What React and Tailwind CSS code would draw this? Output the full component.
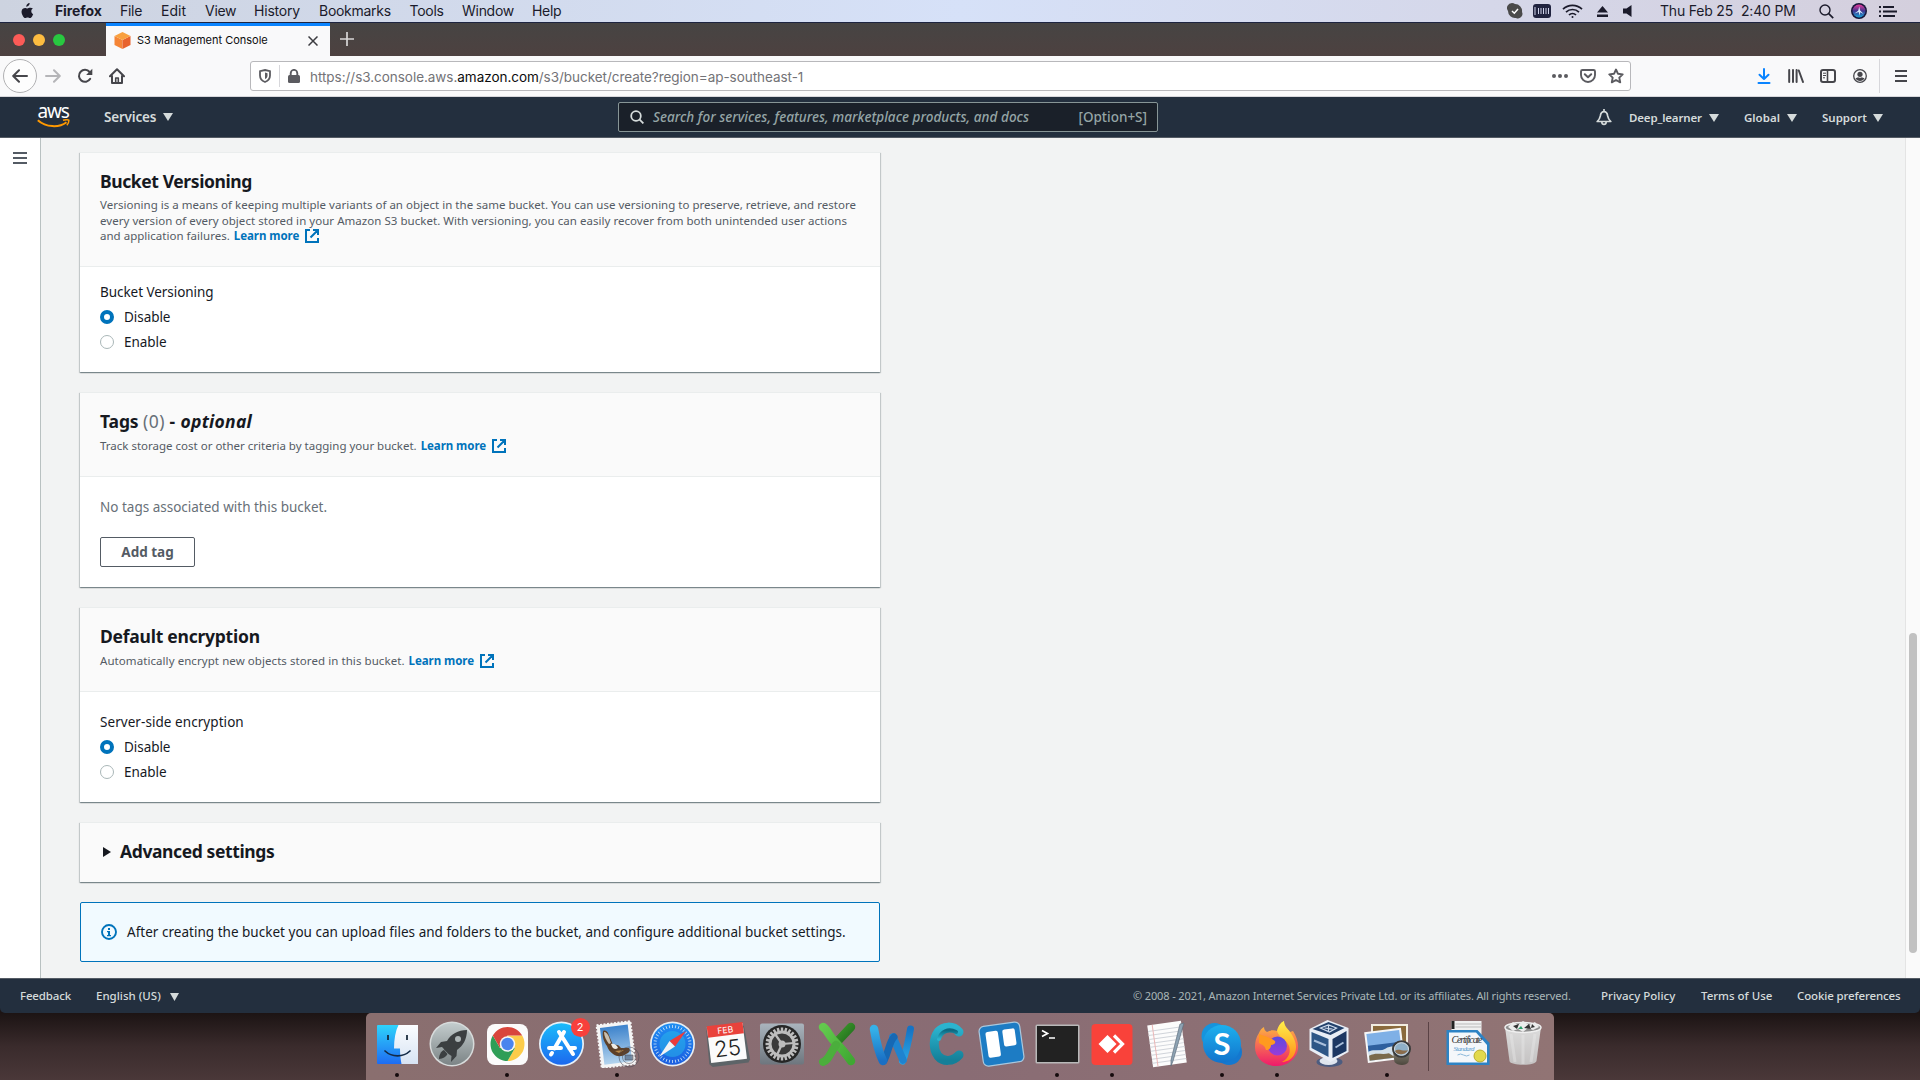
import React from "react";

const SF = "font-[Inter,sans-serif]";

function T({ className = "", children }) {
  return <span className={"whitespace-nowrap " + className}>{children}</span>;
}

function Caret({ className = "w-[10px]" }) {
  return (
    <svg className={"h-[8px] shrink-0 " + className} viewBox="0 0 10 8" preserveAspectRatio="none">
      <path d="M0 0h10L5 8z" fill="currentColor" />
    </svg>
  );
}

/* ---------- macOS menu bar ---------- */

function MenuBar() {
  return (
    <div className={"flex h-[23px] shrink-0 items-center border-b border-[#1d2440] bg-linear-to-r from-[#cdd3e0] via-[#d6e1f8] to-[#d4cfdd] text-[14px] leading-[20px] tracking-[-0.28px] text-[#1b1b2b] " + SF}>
      <svg className="ml-[20px] h-[16px] w-[14px]" viewBox="0 0 14 16">
        <path d="M9.6 0c.1 1-.3 1.900-.9 2.600-.6.7-1.500 1.200-2.400 1.100-.1-.9.300-1.900.9-2.500C7.800.500 8.800.1 9.600 0zM12.900 5.600c-1 .6-1.600 1.500-1.600 2.600 0 1.300.8 2.400 1.900 2.900-.2.700-.6 1.400-1 2.100-.6.900-1.300 1.900-2.300 1.900-.9 0-1.200-.6-2.300-.6s-1.400.6-2.300.6c-1 0-1.700-1-2.300-1.900C1.700 11.300 1 8.700 2 6.800c.6-1.200 1.800-1.900 3-1.900.9 0 1.800.6 2.500.6.600 0 1.700-.8 2.900-.7 1 0 1.900.400 2.500.8z" fill="#1b1b2b" />
      </svg>
      <div className="flex pb-px pl-[21px]">
        <T className="w-[65px] font-bold tracking-[-0.1px]">Firefox</T>
        <T className="w-[41px]">File</T>
        <T className="w-[44px] tracking-normal">Edit</T>
        <T className="w-[49px]">View</T>
        <T className="w-[65px] tracking-[-0.2px]">History</T>
        <T className="w-[90.5px]">Bookmarks</T>
        <T className="w-[52.5px]">Tools</T>
        <T className="w-[70px]">Window</T>
        <T>Help</T>
      </div>
      <div className="ml-auto flex items-center">
        <svg className="h-[16px] w-[16px]" viewBox="0 0 16 16">
          <path d="M5 0a5 5 0 0 1 3 1 7 7 0 0 1 7 8 4.500 4.500 0 0 1-6 6A7 7 0 0 1 1 8 5 5 0 0 1 5 0z" fill="#4a4a4a" />
          <path d="M5 8l2.300 2.200L11 6" fill="none" stroke="#fff" strokeWidth="1.500" />
        </svg>
        <svg className="ml-[10px] h-[14px] w-[18px]" viewBox="0 0 18 14">
          <rect width="18" height="14" rx="3" fill="#20233f" />
          <path d="M2 3v8M5.500 4v6M8 4v6M10.500 4v6M13 4v6M15.500 4v6" stroke="#cfd3ea" strokeWidth="1" />
        </svg>
        <svg className="ml-[11px] h-[15px] w-[21px]" viewBox="0 0 21 15" fill="none" stroke="#1b1b2b" strokeWidth="1.700">
          <path d="M1 5.200a13.500 13.500 0 0 1 19 0M4 8.200a9.200 9.200 0 0 1 13 0M7 11a5 5 0 0 1 7 0" />
          <circle cx="10.500" cy="13" r="1" fill="#1b1b2b" stroke="none" />
        </svg>
        <svg className="ml-[14px] h-[11px] w-[11px]" viewBox="0 0 11 11">
          <path d="M5.500 0L11 6.500H0zM0 8.500h11V11H0z" fill="#1b1b2b" />
        </svg>
        <svg className="ml-[15px] h-[12px] w-[9px]" viewBox="0 0 9 12">
          <path d="M0 3.500h3.500L8.500 0v12L3.500 8.500H0z" fill="#1b1b2b" />
        </svg>
        <T className="ml-[28px] w-[81px] pb-px tracking-[-0.2px]">Thu Feb 25</T>
        <T className="w-[78px] pb-px tracking-[-0.2px]">2:40 PM</T>
        <svg className="h-[15px] w-[15px]" viewBox="0 0 15 15" fill="none" stroke="#1b1b2b">
          <circle cx="6" cy="6" r="5" strokeWidth="1.400" />
          <path d="M9.700 9.700l4.500 4.500" strokeWidth="1.700" />
        </svg>
        <svg className="ml-[17px] h-[16px] w-[16px]" viewBox="0 0 16 16">
          <defs>
            <linearGradient id="siri" x1="0" y1="0" x2="0" y2="1">
              <stop offset="0" stopColor="#e83a9a" />
              <stop offset=".5" stopColor="#3f3590" />
              <stop offset="1" stopColor="#18a6d8" />
            </linearGradient>
          </defs>
          <circle cx="8" cy="8" r="8" fill="#16163a" />
          <circle cx="8" cy="8" r="6.500" fill="url(#siri)" />
          <path d="M8.300 3.500l.7 3.800L12.500 11 9.200 9.200l-.7 3.500-.8-3.700-4.200 1.500 3.700-2.700z" fill="#d8ecff" />
        </svg>
        <svg className="mr-[23px] ml-[12px] h-[11px] w-[18px]" viewBox="0 0 18 11">
          <path d="M0 0h2v2H0zM4 0h11v2H4zM0 4.500h2v2H0zM4 4.500h14v2H4zM0 9h2v2H0zM4 9h12v2H4z" fill="#1b1b2b" />
        </svg>
      </div>
    </div>
  );
}

/* ---------- Firefox chrome ---------- */

function TabBar() {
  return (
    <div className={"flex h-[33px] shrink-0 bg-linear-to-b from-[#464443] to-[#4d4140] " + SF}>
      <div className="flex w-[106px] items-center gap-[8px] pl-[13px]">
        <i className="size-[12px] rounded-full bg-[#fc5b57]" />
        <i className="size-[12px] rounded-full bg-[#fdbc40]" />
        <i className="size-[12px] rounded-full bg-[#28c840]" />
      </div>
      <div className="flex w-[224px] items-center border-t-[3px] border-[#0a84ff] bg-[#f9f9fa] pb-px pl-[8px]">
        <svg className="h-[17px] w-[17px]" viewBox="0 0 17 17">
          <path d="M.5 4l8 4v9l-8-4z" fill="#f58536" />
          <path d="M16.500 4l-8 4v9l8-4z" fill="#e8622c" />
          <path d="M8.500 0l8 4-8 4-8-4z" fill="#f9a03f" />
        </svg>
        <T className="ml-[6px] w-[171px] text-[11px] text-[#0c0c0d]">S3 Management Console</T>
        <svg className="h-[10px] w-[10px]" viewBox="0 0 10 10" stroke="#3c3c40" strokeWidth="1.500">
          <path d="M.5.5l9 9M9.500.5l-9 9" />
        </svg>
      </div>
      <svg className="mt-[9px] ml-[10px] h-[14px] w-[14px]" viewBox="0 0 14 14" stroke="#d8d6d6" strokeWidth="1.700">
        <path d="M7 0v14M0 7h14" />
      </svg>
    </div>
  );
}

function ToolBar() {
  return (
    <div className={"flex h-[41px] shrink-0 items-center border-b border-[#d7d7db] bg-[#f9f9fa] " + SF}>
      <div className="ml-[3px] flex size-[34px] items-center justify-center rounded-full border border-[#b1b1b3] bg-[#fdfdfd]">
        <svg className="h-[14px] w-[16px]" viewBox="0 0 16 14" fill="none" stroke="#46464b" strokeWidth="2" strokeLinecap="round" strokeLinejoin="round">
          <path d="M15 7H1.500M7 1.200L1.200 7 7 12.800" />
        </svg>
      </div>
      <svg className="ml-[8px] h-[14px] w-[16px]" viewBox="0 0 16 14" fill="none" stroke="#b5b5b8" strokeWidth="2" strokeLinecap="round" strokeLinejoin="round">
        <path d="M1 7h13.500M9 1.200L14.800 7 9 12.800" />
      </svg>
      <svg className="ml-[16px] h-[16px] w-[16px]" viewBox="0 0 16 16">
        <path d="M13.200 10.800A6 6 0 1 1 12.600 4" fill="none" stroke="#46464b" strokeWidth="2" strokeLinecap="round" />
        <path d="M15.300.8v6.200H9.100z" fill="#46464b" />
      </svg>
      <svg className="ml-[16px] h-[16px] w-[16px]" viewBox="0 0 16 16" fill="none" stroke="#46464b" strokeWidth="2" strokeLinecap="round" strokeLinejoin="round">
        <path d="M1 8.300L8 1.300l7 7M3 8v7h10V8" />
        <path d="M6.700 14.500v-4.500h2.600v4.500" strokeWidth="1.600" />
      </svg>
      <div className="ml-[125px] flex h-[30px] w-[1381px] items-center rounded-[3px] border border-[#b8b8bb] bg-white">
        <svg className="ml-[8px] h-[14px] w-[12px]" viewBox="0 0 12 14">
          <path d="M6 1l5 1.200v4.300c0 3-1.800 5.300-5 6.500-3.200-1.200-5-3.500-5-6.500V2.200z" fill="none" stroke="#5b5b60" strokeWidth="1.800" />
          <path d="M6 3.600v6.500c1.600-.8 2.500-2 2.500-3.700V4.200z" fill="#5b5b60" />
        </svg>
        <i className="ml-[8px] h-[22px] w-px bg-[#d7d7db]" />
        <svg className="ml-[8px] h-[14px] w-[12px]" viewBox="0 0 12 14">
          <rect y="6" width="12" height="8" rx="1.500" fill="#5b5b60" />
          <path d="M2.700 7V4.200a3.300 3.300 0 0 1 6.600 0V7" fill="none" stroke="#5b5b60" strokeWidth="1.900" />
        </svg>
        <T className="ml-[10px] pt-[3px] text-[13.5px] tracking-[-0.04px] text-[#737377]">
          https://s3.console.aws.<span className="text-[#0c0c0d]">amazon.com</span>/s3/bucket/create?region=ap-southeast-1
        </T>
        <svg className="ml-auto h-[4px] w-[16px]" viewBox="0 0 16 4" fill="#5b5b60">
          <circle cx="2" cy="2" r="2" />
          <circle cx="8" cy="2" r="2" />
          <circle cx="14" cy="2" r="2" />
        </svg>
        <svg className="ml-[12px] h-[14px] w-[16px]" viewBox="0 0 16 14" fill="none" stroke="#5b5b60" strokeLinecap="round" strokeLinejoin="round">
          <path d="M2.500 1h11A1.500 1.500 0 0 1 15 2.500V6A7 7 0 0 1 1 6V2.500A1.500 1.500 0 0 1 2.500 1z" strokeWidth="1.900" />
          <path d="M4.800 5.300L8 8.300l3.200-3" strokeWidth="2" />
        </svg>
        <svg className="mr-[6px] ml-[12px] h-[16px] w-[16px]" viewBox="0 0 16 16" fill="none" stroke="#5b5b60" strokeWidth="1.900" strokeLinejoin="round">
          <path d="M8 1.500l2 4.300 4.700.6-3.400 3.200.9 4.700L8 12l-4.200 2.300.9-4.700L1.300 6.400 6 5.800z" />
        </svg>
      </div>
      <div className="ml-auto flex items-center">
        <svg className="h-[16px] w-[14px]" viewBox="0 0 14 16" fill="none" stroke="#0a84ff" strokeWidth="2" strokeLinecap="round" strokeLinejoin="round">
          <path d="M7 1v9.500M2.500 6.800L7 11l4.500-4.200M1.500 15h11" />
        </svg>
        <svg className="ml-[17px] h-[14px] w-[16px]" viewBox="0 0 16 14" stroke="#46464b" strokeWidth="2" strokeLinecap="round">
          <path d="M1.200 1v12M5 1v12M8.600 1v12M10.800 1.500L15 13" />
        </svg>
        <svg className="ml-[16px] h-[14px] w-[16px]" viewBox="0 0 16 14" fill="none" stroke="#46464b">
          <rect x="1" y="1" width="14" height="12" rx="2" strokeWidth="2" />
          <path d="M7.500 1v12" strokeWidth="1.600" />
          <path d="M3 4.200h3M3 6.500h3M3 8.800h2" strokeWidth="1" />
        </svg>
        <svg className="ml-[17px] h-[14px] w-[14px]" viewBox="0 0 14 14">
          <circle cx="7" cy="7" r="6.300" fill="none" stroke="#46464b" strokeWidth="1.300" />
          <circle cx="7" cy="5.300" r="2.600" fill="#46464b" />
          <path d="M2.500 9.300c1.200 0 1.800-1 2.700-1 .9.700 2.700.7 3.600 0 .9 0 1.500 1 2.700 1-1 1.800-2.500 2.800-4.500 2.800s-3.500-1-4.500-2.800z" fill="#46464b" />
        </svg>
        <i className="ml-[12px] h-[34px] w-px bg-[#d7d7db]" />
        <svg className="mr-[13px] ml-[15px] h-[12px] w-[12px]" viewBox="0 0 12 12" fill="#46464b">
          <path d="M0 0h12v2H0zM0 5h12v2H0zM0 10h12v2H0z" />
        </svg>
      </div>
    </div>
  );
}

/* ---------- AWS console ---------- */

function AwsNav() {
  return (
    <div className="flex h-[41px] shrink-0 items-center border-b border-[#545b64] bg-[#232f3e] text-[#d5dbdb]">
      <div className="ml-[36px] flex w-[34px] flex-col items-center pb-[3px]">
        <T className="text-[19px] leading-[14px] tracking-[-1.2px] text-white">aws</T>
        <svg className="mt-px h-[9px] w-[33px]" viewBox="0 0 33 9" fill="none" stroke="#ff9900">
          <path d="M.8 1.200C9 8.500 22 9 29.500 3.200" strokeWidth="2" />
          <path d="M26 1.300c2-.6 4.500-.8 5.800-.2.200 1.600-.5 3.600-1.900 5.200" strokeWidth="1.500" />
        </svg>
      </div>
      <T className="ml-[34px] w-[59px] text-[13.5px] font-semibold tracking-[-0.2px]">Services</T>
      <Caret />
      <div className="ml-[445px] flex h-[30px] w-[540px] items-center rounded-[2px] border border-[#879596] bg-[#1a2029]">
        <svg className="ml-[11px] h-[14px] w-[14px]" viewBox="0 0 14 14" fill="none" stroke="#d5dbdb" strokeWidth="1.800">
          <circle cx="6" cy="6" r="4.800" />
          <path d="M9.400 9.400l4 4" />
        </svg>
        <T className="ml-[9px] text-[13.5px] font-medium tracking-[0.05px] text-[#95a5a6] italic">Search for services, features, marketplace products, and docs</T>
        <T className="mr-[10px] ml-auto text-[13.5px] font-medium text-[#95a5a6]">[Option+S]</T>
      </div>
      <svg className="ml-[438px] h-[17px] w-[16px]" viewBox="0 0 16 17" fill="none" stroke="#d5dbdb" strokeWidth="1.700" strokeLinejoin="round">
        <path d="M8 0v2.500M1.200 12.500C4 9.800 4 8.500 4.400 6.500 4.800 4.200 6 2.700 8 2.700s3.200 1.500 3.600 3.800c.4 2 .4 3.300 3.200 6zM5.800 13c.2 3.200 4.200 3.200 4.400 0" />
      </svg>
      <div className="flex items-center pt-px text-[11.5px] font-semibold">
        <T className="ml-[17px] w-[80px] tracking-[-0.15px]">Deep_learner</T>
        <Caret />
        <T className="ml-[25px] w-[43px]">Global</T>
        <Caret />
        <T className="ml-[25px] w-[51px]">Support</T>
        <Caret />
      </div>
    </div>
  );
}

function ExternalIcon() {
  return (
    <svg className="ml-[6px] inline-block h-[14px] w-[14px] align-[-3px]" viewBox="0 0 14 14" fill="none" stroke="#0073bb" strokeWidth="2">
      <path d="M5 1H1v12h12V9M8 1h5v5M13 1L5.500 8.500" />
    </svg>
  );
}

function LearnMore() {
  return (
    <a className="ml-px text-[#0073bb]">
      <T className="font-bold tracking-[-0.06px]">Learn more</T>
      <ExternalIcon />
    </a>
  );
}

function Card({ className, head, headClass, children }) {
  return (
    <section className={"border-t border-[#eaeded] bg-white shadow-[0_1px_1px_0_rgba(0,28,36,0.3),1px_1px_1px_0_rgba(0,28,36,0.15),-1px_1px_1px_0_rgba(0,28,36,0.15)] " + className}>
      <header className={"border-b border-[#eaeded] bg-[#fafafa] px-5 " + headClass}>{head}</header>
      <div className="px-5">{children}</div>
    </section>
  );
}

function Radio({ on, children }) {
  return (
    <label className="flex h-[25px] items-center text-[13.5px]">
      {on ? (
        <i className="size-[14px] rounded-full border-[4px] border-[#0073bb] bg-white" />
      ) : (
        <i className="size-[14px] rounded-full border border-[#aab7b8] bg-white" />
      )}
      <T className="ml-[10px] pt-px tracking-[-0.05px]">{children}</T>
    </label>
  );
}

const H2 = "text-[17.5px] leading-[22px] font-bold";
const DESC = "text-[11.5px] leading-[15.5px] text-[#545b64]";

function Page() {
  return (
    <div className="flex h-[840px] shrink-0 bg-[#f2f3f3] text-[#16191f]">
      <div className="w-[41px] border-r border-[#b9c1c1] bg-white">
        <svg className="mt-[14px] ml-[13px] h-[12px] w-[14px]" viewBox="0 0 14 12" fill="#545b64">
          <path d="M0 0h14v2H0zM0 5h14v2H0zM0 10h14v2H0z" />
        </svg>
      </div>
      <main className="ml-[39px] w-[800px] pt-[14px]">
        <Card
          className="h-[220px]"
          headClass="h-[114px] pt-[17px]"
          head={
            <>
              <h2 className={H2}><T className="tracking-[-0.4px]">Bucket Versioning</T></h2>
              <p className={"mt-[5px] " + DESC}>
                <T className="tracking-[0.015px]">Versioning is a means of keeping multiple variants of an object in the same bucket. You can use versioning to preserve, retrieve, and restore</T>
                <br />
                <T className="tracking-[0.038px]">every version of every object stored in your Amazon S3 bucket. With versioning, you can easily recover from both unintended user actions</T>
                <br />
                <T className="tracking-[0.02px]">and application failures.</T> <LearnMore />
              </p>
            </>
          }
        >
          <div className="pt-[13px] text-[13.5px] leading-[24px]"><T className="tracking-[-0.05px]">Bucket Versioning</T></div>
          <Radio on>Disable</Radio>
          <Radio>Enable</Radio>
        </Card>
        <Card
          className="mt-[20px] h-[195px]"
          headClass="h-[84px] pt-[17px]"
          head={
            <>
              <h2 className={H2}>
                <T className="tracking-[-0.15px]">Tags</T> <T className="font-normal tracking-[0.5px] text-[#687078]">(0)</T> <T className="tracking-[0.4px]">- </T><T className="tracking-[0.25px] italic">optional</T>
              </h2>
              <p className={"mt-[6px] " + DESC}>
                <T>Track storage cost or other criteria by tagging your bucket.</T> <LearnMore />
              </p>
            </>
          }
        >
          <div className="pt-[18px] text-[13.5px] leading-[24px] text-[#687078]"><T>No tags associated with this bucket.</T></div>
          <button className="mt-[18px] flex h-[30px] w-[95px] items-center justify-center rounded-[2px] border border-[#545b64] text-[13.5px] font-bold text-[#545b64]">
            <T className="pt-px">Add tag</T>
          </button>
        </Card>
        <Card
          className="mt-[20px] h-[195px]"
          headClass="h-[84px] pt-[17px]"
          head={
            <>
              <h2 className={H2}><T className="tracking-[-0.24px]">Default encryption</T></h2>
              <p className={"mt-[6px] " + DESC}>
                <T className="tracking-[0.07px]">Automatically encrypt new objects stored in this bucket.</T> <LearnMore />
              </p>
            </>
          }
        >
          <div className="pt-[18px] text-[13.5px] leading-[24px]"><T className="tracking-[0.06px]">Server-side encryption</T></div>
          <Radio on>Disable</Radio>
          <Radio>Enable</Radio>
        </Card>
        <section className="mt-[20px] flex h-[60px] items-center border-t border-[#eaeded] bg-[#fafafa] shadow-[0_1px_1px_0_rgba(0,28,36,0.3),1px_1px_1px_0_rgba(0,28,36,0.15),-1px_1px_1px_0_rgba(0,28,36,0.15)]">
          <svg className="mb-[2px] ml-[23px] h-[10px] w-[8px]" viewBox="0 0 8 10"><path d="M0 0l8 5-8 5z" fill="#16191f" /></svg>
          <h2 className={"ml-[9px] pb-[3px] " + H2}><T className="tracking-[-0.39px]">Advanced settings</T></h2>
        </section>
        <div className="mt-[20px] flex h-[60px] items-center rounded-[2px] border border-[#0073bb] bg-[#f1faff]">
          <svg className="ml-[20px] h-[16px] w-[16px]" viewBox="0 0 16 16">
            <circle cx="8" cy="8" r="7" fill="none" stroke="#0073bb" strokeWidth="1.900" />
            <path d="M7 4h2v2H7zM6 7h3v4h1v1.300H6V11h1V8.300H6z" fill="#0073bb" />
          </svg>
          <T className="ml-[10px] pt-px text-[13.5px] tracking-[0.02px]">After creating the bucket you can upload files and folders to the bucket, and configure additional bucket settings.</T>
        </div>
      </main>
      <div className="ml-auto w-[15px] border-l border-[#e4e4e4] bg-[#fafafa] pt-[495px] pl-[3px]">
        <div className="h-[320px] w-[8px] rounded-full bg-[#c1c1c1]" />
      </div>
    </div>
  );
}

function Footer() {
  return (
    <div className="shrink-0 bg-[#1c1414]">
      <div className="flex h-[35px] items-center rounded-b-[5px] border-t border-[#545b64] bg-[#232f3e] text-[11.5px] font-medium text-[#d5dbdb]">
        <T className="ml-[20px] w-[76px] tracking-[-0.15px]">Feedback</T>
        <T className="w-[74px]">English (US)</T>
        <Caret className="mt-[2px] w-[9px]" />
        <T className="ml-auto w-[468px] text-[11px] font-normal tracking-[-0.12px] text-[#aab7b8]">© 2008 - 2021, Amazon Internet Services Private Ltd. or its affiliates. All rights reserved.</T>
        <T className="w-[100px]">Privacy Policy</T>
        <T className="w-[96px]">Terms of Use</T>
        <T className="w-[123px] tracking-[-0.13px]">Cookie preferences</T>
      </div>
    </div>
  );
}

/* ---------- Dock ---------- */

const TEETH = Array.from({ length: 24 }, (_, i) => i * 15);
const TICKS = Array.from({ length: 36 }, (_, i) => i * 10);

function Gradients() {
  const g = (id, a, b, x2 = 0, y2 = 1) => (
    <linearGradient id={id} x1="0" y1="0" x2={x2} y2={y2}>
      <stop offset="0" stopColor={a} />
      <stop offset="1" stopColor={b} />
    </linearGradient>
  );
  return (
    <svg className="absolute h-0 w-0">
      <defs>
        {g("gFinder", "#2ed3fb", "#1e6cf2")}
        {g("gFace", "#fbfdff", "#d7e3f3")}
        {g("gRocket", "#c3cccd", "#7c8486")}
        {g("gStore", "#1bbcfb", "#1c68ee")}
        {g("gSafari", "#1f8ef2", "#1b5ee0")}
        {g("gSky", "#3d83cc", "#b4d4ee")}
        {g("gSteel", "#aab4bd", "#6e767e")}
        {g("gX1", "#3f9b2c", "#1e6b1c", 1, 1)}
        {g("gX2", "#63c94e", "#3fa832", 1, 1)}
        {g("gW", "#35b1e8", "#1a6fc4")}
        {g("gW2", "#1673c4", "#2aa5e4")}
        {g("gC", "#2bb4cf", "#147f98")}
        {g("gC2", "#0d6a82", "#2ab3cc")}
        {g("gSkype", "#1cb0ee", "#1273cc")}
        {g("gFx", "#ffc93b", "#ee1a6b")}
        {g("gFx2", "#fff04a", "#ff8a16")}
        {g("gFxP", "#5a4be0", "#9a3bd8")}
        {g("gTrash", "#dcdcdc", "#c4c2c2")}
        {g("gCup", "#8c8678", "#4c473d")}
      </defs>
    </svg>
  );
}

const ICONS = {
  finder: (
    <>
      <rect x="4" y="5" width="41" height="39" rx="1" fill="url(#gFinder)" />
      <path d="M25.500 5H45v39H28.500c-1-5-1.500-10-1.500-15.500h-6C21 19 22.500 11 25.500 5z" fill="url(#gFace)" />
      <path d="M15 15v5M34 15v5" stroke="#123" strokeWidth="1.700" />
      <path d="M12 31c7 6.500 18 6.500 25 0" fill="none" stroke="#132a46" strokeWidth="1.700" strokeLinecap="round" />
    </>
  ),
  launchpad: (
    <>
      <circle cx="24" cy="24" r="22.500" fill="#d7dbdb" />
      <circle cx="24" cy="24" r="21" fill="url(#gRocket)" />
      <path d="M39 10c-9 0-16 4-20 11l-6 1-5 6 6-1c1 1 2 2 2.500 3l4 4c1 .5 2 1.500 3 2l-.5 6 5.500-6 .5-6c6-4 10-11 10-20z" fill="#3b3f41" />
      <path d="M16 30c-3 1-5 5-5 9 4-.5 7-2 8.500-5z" fill="#3b3f41" />
      <circle cx="30" cy="19" r="3" fill="#aeb6b7" />
    </>
  ),
  chrome: (
    <>
      <rect x="4" y="4" width="41" height="41" rx="8" fill="#fbfbfb" />
      <path d="M24.500 24V15.500h14.700A17 17 0 0 1 24.500 41l7.300-12.700z" fill="#fccc4a" />
      <path d="M24.500 24l7.300 4.300L24.500 41A17 17 0 0 1 9.800 15.500l7.300 12.700z" fill="#2f9e57" />
      <path d="M9.800 15.500A17 17 0 0 1 39.200 15.500H24.500L17 28z" fill="#d8463c" />
      <circle cx="24.500" cy="24" r="7.800" fill="#f6f6f6" />
      <circle cx="24.500" cy="24" r="6.200" fill="#4a85ee" />
    </>
  ),
  appstore: (
    <>
      <circle cx="23.500" cy="24" r="22.500" fill="#e8f1f8" />
      <circle cx="23.500" cy="24" r="20.800" fill="url(#gStore)" />
      <g stroke="#fff" strokeWidth="4" strokeLinecap="round">
        <path d="M26 12L16.500 28.500M21 12l14 22M11 28h12M31 28h6M14 33l-1 1.500" />
      </g>
    </>
  ),
  mail: (
    <>
      <g transform="rotate(-7 24 24)">
        <rect x="6" y="3" width="34" height="43" fill="#f5f5f5" stroke="#f5f5f5" strokeWidth="2" strokeDasharray="2 1.500" />
        <rect x="9" y="6" width="28" height="37" fill="url(#gSky)" />
      </g>
      <path d="M10 11c2-1 4 0 5 2l5 12c4-1 6 0 8 3l8 0c2 2 0 5-3 6-4 3-9 3-13 0-3-2-5-5-6-8-3-4-5-9-4-15z" fill="#5d4028" />
      <path d="M11 12c2 0 4 2 5 5l2 6-2 1c-3-4-5-8-5-12z" fill="#c9bfb0" />
      <path d="M18 24c3-1 6 1 7 4l-2 1c-3 0-4-2-5-5z" fill="#f0ece4" />
      <path d="M22 31l9-1-5 3z" fill="#b98a4a" />
      <g fill="none" stroke="#4a4a55" strokeOpacity=".55">
        <circle cx="36" cy="37" r="10" />
        <circle cx="36" cy="37" r="6.500" />
        <path d="M32 35h8v5h-8z" fill="#33445c" fillOpacity=".5" />
      </g>
    </>
  ),
  safari: (
    <>
      <circle cx="24.500" cy="24" r="22.500" fill="#e9eef2" />
      <circle cx="24.500" cy="24" r="20.800" fill="url(#gSafari)" />
      <circle cx="24.500" cy="24" r="13" fill="#2cc0e8" opacity=".45" />
      <g stroke="#cfe6fa" strokeWidth=".8">
        {TICKS.map((a) => (
          <path key={a} d="M24.500 5v3" transform={`rotate(${a} 24.500 24)`} />
        ))}
      </g>
      <path d="M38 11L21.500 21l5.500 5.500z" fill="#ec3b3b" />
      <path d="M11 37l10.500-16 5.500 5.500z" fill="#f1f3f5" />
    </>
  ),
  calendar: (
    <g transform="rotate(-7 24 24)">
      <path d="M5 8l-1 34 3 3h36l2-3-2-34z" fill="#5d6468" />
      <rect x="6" y="5" width="36" height="36" fill="#fbfbfb" />
      <rect x="6" y="4" width="36" height="11.500" fill="#e9423c" />
      <text x="24" y="13" textAnchor="middle" fontSize="8.500" fill="#fff" fontFamily="Inter, sans-serif">FEB</text>
      <text x="24" y="36" textAnchor="middle" fontSize="22" fontWeight="300" fill="#222" fontFamily="Inter, sans-serif">25</text>
    </g>
  ),
  settings: (
    <>
      <rect x="2" y="3.500" width="44" height="41" rx="2" fill="url(#gSteel)" />
      <circle cx="24" cy="24" r="19" fill="#262626" />
      <g stroke="#bdbdbd" strokeWidth="2.400">
        {TEETH.map((a) => (
          <path key={a} d="M24 7.500v4" transform={`rotate(${a} 24 24)`} />
        ))}
      </g>
      <circle cx="24" cy="24" r="12" fill="#3a3a3a" stroke="#bdbdbd" strokeWidth="3" />
      <path d="M24 24l12-1M24 24l-7-10M24 24l-5 11" stroke="#bdbdbd" strokeWidth="2.200" />
      <circle cx="24" cy="24" r="3.500" fill="#bdbdbd" />
    </>
  ),
  excel: (
    <g strokeLinecap="round" fill="none">
      <path d="M38 7L23 23" stroke="url(#gX1)" strokeWidth="8.500" />
      <path d="M10 7c5 3 6 10 14 17 6 6 9 10 14 17" stroke="url(#gX2)" strokeWidth="8.500" />
      <path d="M10 42c6-2 7-9 13-17" stroke="#4bae3c" strokeWidth="8" />
    </g>
  ),
  word: (
    <g strokeLinecap="round" strokeLinejoin="round" fill="none">
      <path d="M42.500 9c-2 12-4 23-8 32" stroke="url(#gW2)" strokeWidth="7" />
      <path d="M25 17l10 23" stroke="#1f83cf" strokeWidth="7.500" />
      <path d="M26 17c-5 5-5 14-10 24" stroke="#1668b4" strokeWidth="7" />
      <path d="M6 9c2 12 4 22 9 32" stroke="url(#gW)" strokeWidth="8.500" />
    </g>
  ),
  camtasia: (
    <g fill="none" strokeLinecap="round" transform="translate(-3 0)">
      <path d="M39 12c-6-7-16-6-21 0-5 7-5 17 0 24 5 6 15 6 21-1" stroke="url(#gC)" strokeWidth="9" />
      <path d="M36 12c-8-4-15 0-17 7" stroke="url(#gC2)" strokeWidth="4" />
    </g>
  ),
  trello: (
    <g transform="rotate(-8 24 24)">
      <rect x="3" y="4" width="41" height="40" rx="5" fill="#1d7cc4" stroke="#a9c8de" strokeWidth="1.200" />
      <rect x="9" y="10" width="12.500" height="26" rx="2" fill="#fff" />
      <rect x="26" y="10" width="12.500" height="17" rx="2" fill="#fff" />
    </g>
  ),
  terminal: (
    <>
      <rect x="2.500" y="4.500" width="44" height="39" rx="1.500" fill="#b9b9b9" />
      <rect x="4" y="6" width="41" height="36" fill="#222" />
      <path d="M9 10.500l5.500 3L9 16.500M16 18h6" fill="none" stroke="#fff" strokeWidth="1.700" />
    </>
  ),
  anydesk: (
    <>
      <rect x="3.500" y="4" width="41" height="41" rx="4" fill="#f9423a" />
      <path d="M19.500 15l9 9-9 9-9-9z" fill="#fff" />
      <path d="M26 15.500l8.500 8.500-8.500 8.500" fill="none" stroke="#fff" strokeWidth="3.200" />
    </>
  ),
  textedit: (
    <>
      <g transform="rotate(-8 24 24)">
        <rect x="7" y="3" width="34" height="42" fill="#fcfcfc" />
        <path d="M7 9h34M7 13h34M7 17h34M7 21h34M7 25h34M7 29h34M7 33h34M7 37h34M7 41h34" stroke="#d0d4da" />
        <path d="M12 3v42" stroke="#eab6b6" />
      </g>
      <path d="M41 3l-11 38-2 5 0-6L37 4z" fill="#8ea3b4" stroke="#5f6f7c" strokeWidth=".7" />
    </>
  ),
  skype: (
    <>
      <circle cx="16.500" cy="16" r="13" fill="#1594dd" />
      <circle cx="31" cy="32" r="13" fill="#1478cf" />
      <circle cx="24" cy="24" r="19" fill="url(#gSkype)" />
      <text x="24" y="35" textAnchor="middle" fontSize="31" fontWeight="700" fill="#fff" fontFamily="Lato, sans-serif">S</text>
    </>
  ),
  firefox: (
    <>
      <path d="M6 13c1-3 3-5 5-6 0 2 1 4 3 5 3-2 7-2 10-1 1-4 3-8 7-10 0 5 3 7 6 11l3-1c5 8 7 17 3 24-4 7-11 11-19 11C11 46 2 38 2 27c0-5 1-10 4-14z" fill="url(#gFx)" />
      <path d="M24 11c1-4 3-8 7-10 0 5 3 7 6 11 6 8 8 16 4 23-3 5-8 7-12 7 7-4 9-10 7-16-2-6-10-8-12-15z" fill="url(#gFx2)" />
      <circle cx="24.500" cy="26" r="9.500" fill="url(#gFxP)" />
      <path d="M6 14c6 2 10 3 16 7 1 2-1 4-4 4 0 3-2 5-5 5-1-4-3-5-7-7z" fill="#ff9a1f" />
    </>
  ),
  virtualbox: (
    <g transform="translate(-2.500 -1)">
      <ellipse cx="24" cy="43" rx="13" ry="5" fill="#4c5c80" />
      <ellipse cx="23" cy="42" rx="9" ry="4" fill="#dfe5ee" />
      <path d="M22 1l21 8v24L25 43 4 31V10z" fill="#e9eef6" />
      <path d="M23 3l16 6-14 7-18-6z" fill="#23416c" />
      <path d="M6 13l17 7v18L6 29z" fill="#2d5686" />
      <path d="M27 20l14-8v20L27 39z" fill="#1c3763" />
      <path d="M15 9l8-3 8 3-7 4zM19 9l8 1M23 6v6" fill="none" stroke="#cfdcee" strokeWidth="1.200" />
      <path d="M8.500 21.500l12 5M30 28.500l8-5" stroke="#a9bfdb" strokeWidth="2" />
    </g>
  ),
  preview: (
    <>
      <rect x="8" y="4" width="37" height="30" fill="#f1ece0" />
      <rect x="10" y="6" width="33" height="26" fill="#8a6a3c" />
      <g transform="rotate(-7 20 26)">
        <rect x="3" y="10" width="37" height="31" fill="#f6f6f6" />
        <rect x="5" y="12" width="33" height="27" fill="#7fb0e6" />
        <path d="M5 24h33v6H5z" fill="#2e5f9e" />
        <path d="M5 30c6-3 11 2 17-1s10 0 16-2v12H5z" fill="#d3e0ea" />
        <path d="M5 34c8-3 12 1 20 0l6 5H5z" fill="#7a6a4c" />
      </g>
      <path d="M29.500 29l2 13c3 4 12 4 14 0l2-13z" fill="url(#gCup)" />
      <ellipse cx="38.500" cy="29" rx="8.500" ry="7.800" fill="#4d7ea8" stroke="#3b3b3b" strokeWidth="2" />
      <ellipse cx="38.500" cy="29" rx="7" ry="6.300" fill="#8fb0c8" stroke="#ddd" />
      <path d="M32 31c4-3 8 1 13-1-2 5-11 6-13 1z" fill="#8b6d4b" />
    </>
  ),
  certificates: (
    <g transform="translate(-1.500 0)">
      <path d="M8 1h30v24H8z" fill="#f0f0f0" />
      <path d="M8 1h3v8H8z" fill="#222" />
      <path d="M12 4h26M12 7h26" stroke="#bbb" />
      <path d="M3 10h31l12 13v22H3z" fill="#2d83c4" />
      <path d="M5.500 12.500h27L43.500 25v17.500h-38z" fill="#f4f7fa" />
      <text x="8" y="22.500" fontSize="10" fontStyle="italic" fill="#333" textLength="31" fontFamily="Liberation Serif, serif">Certificate</text>
      <text x="10" y="31" fontSize="7" fontStyle="italic" fill="#5c9dd0" textLength="21" fontFamily="Liberation Serif, serif">Standard</text>
      <path d="M14 35q3-2 6 0t6 0" fill="none" stroke="#8db9da" />
      <circle cx="36.500" cy="36" r="6" fill="#e2d94c" stroke="#b9ad2c" />
    </g>
  ),
  trash: (
    <g transform="translate(-1 0)">
      <path d="M6 7h36l-4.500 34c-1 5-26 5-27 0z" fill="url(#gTrash)" />
      <path d="M12 14l4 28M36 14l-4 28M24 15v29" stroke="#efefef" strokeWidth="3" opacity=".35" />
      <ellipse cx="24" cy="7.500" rx="18" ry="5" fill="#8f8f8f" stroke="#efefef" strokeWidth="1.500" />
      <path d="M9 7l5-5 5 3 5-4 6 4 6-3 4 5-6 3-5-2-5 4-5-3-5 2z" fill="#ececec" />
      <path d="M14 6l4 3 2-5zM25 8l5-4 2 5zM33 4l3 3-4 1z" fill="#333" />
      <path d="M19 9l3-3 2 3z" fill="#2b9c6a" />
    </g>
  ),
};

const DOCK = [
  ["finder", true], ["launchpad"], ["chrome", true], ["appstore"], ["mail", true], ["safari"], ["calendar"],
  ["settings"], ["excel"], ["word"], ["camtasia"], ["trello"], ["terminal", true], ["anydesk", true],
  ["textedit"], ["skype", true], ["firefox", true], ["virtualbox"], ["preview", true],
];

function DockItem({ name, running }) {
  return (
    <div className="relative flex w-[55px] flex-col items-center pt-[7px]">
      <svg className="h-[48px] w-[48px]" viewBox="0 0 48 48">{ICONS[name]}</svg>
      {running && <i className="mt-[5px] size-[4px] rounded-full bg-[#150a0c]" />}
      {name === "appstore" && (
        <span className={"absolute top-[5px] left-[36px] flex size-[19px] items-center justify-center rounded-full bg-[#f8403c] text-[11px] text-white " + SF}>2</span>
      )}
    </div>
  );
}

function Dock() {
  return (
    <div className="flex h-[67px] shrink-0 justify-center bg-linear-to-b from-[#1c1414] via-[#3a2b2c] to-[#4a3839]">
      <Gradients />
      <div className="flex w-[1188px] rounded-t-[5px] bg-linear-to-r from-[#8a6f6f] via-[#896c74] to-[#917474] pl-[3.5px]">
        {DOCK.map(([name, running]) => (
          <DockItem key={name} name={name} running={running} />
        ))}
        <i className="mt-[9px] mr-[12px] ml-[13.5px] h-[49px] w-px bg-[#5a4245]" />
        <DockItem name="certificates" />
        <DockItem name="trash" />
      </div>
    </div>
  );
}

export default function App() {
  return (
    <div className="flex h-[1080px] w-[1920px] flex-col overflow-hidden bg-[#2a2020] font-['Noto_Sans','Open_Sans',sans-serif]">
      <MenuBar />
      <TabBar />
      <ToolBar />
      <AwsNav />
      <Page />
      <Footer />
      <Dock />
    </div>
  );
}
